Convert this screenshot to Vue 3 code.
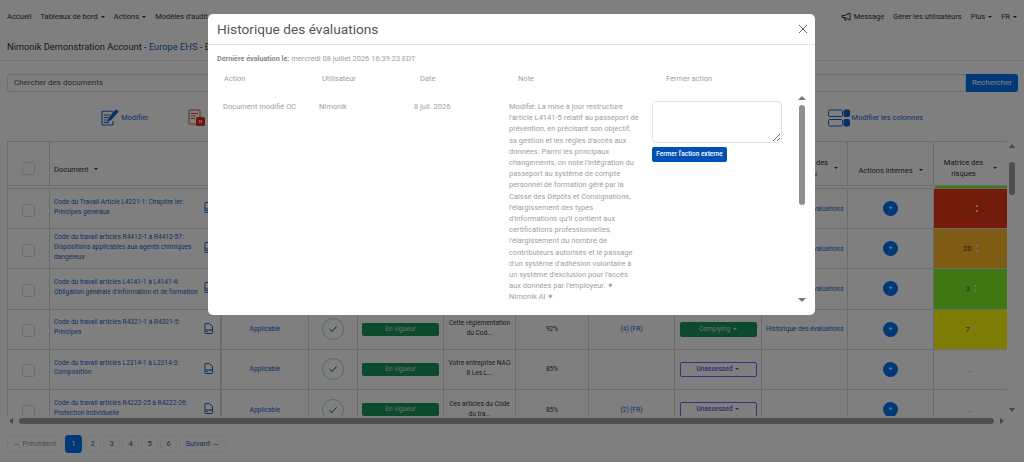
<template>
  <div class="page">
    <nav class="nav">
      <a>Accueil</a>
      <a class="caret">Tableaux de bord</a>
      <a class="caret">Actions</a>
      <a>Modèles d'audit</a>
      <div class="nav-right">
        <a class="msg">
          <svg width="11" height="9" viewBox="0 0 11 9" fill="none" stroke="#333" stroke-width="1">
            <path d="M1 3.5h2.5L9 1v7L3.5 5.5H1z" />
            <path d="M3 5.5L4 8.3h1.4" />
          </svg>
          Message
        </a>
        <a>Gérer les utilisateurs</a>
        <a class="caret">Plus</a>
        <a class="caret">FR</a>
      </div>
    </nav>

    <div class="title-bar">
      Nimonik Demonstration Account - <span class="blue">Europe EHS</span> - EHS
    </div>

    <div class="search">
      <div class="search-input">Chercher des documents</div>
      <div class="search-btn">Rechercher</div>
    </div>

    <div class="toolbar">
      <a class="tool">
        <svg width="18" height="18" viewBox="0 0 18 18" fill="none" stroke="#1763c4" stroke-width="1.1">
          <path d="M12 5V3.2a1 1 0 0 0-1-1H2a1 1 0 0 0-1 1V15a1 1 0 0 0 1 1h9a1 1 0 0 0 1-1v-3" />
          <path d="M3 6h6M3 8.5h4M3 11h3M3 13.5h5" />
          <path d="M7 12l1-3 7-8 2 1.6-7 8z" fill="#1763c4" />
        </svg>
        Modifier
      </a>
      <a class="tool tool-del">
        <svg width="18" height="18" viewBox="0 0 18 18" fill="none" stroke="#d9482b" stroke-width="1">
          <rect x="1" y="1" width="11" height="14" rx="1" />
          <path d="M3 4.5h7M3 7h5M3 9.5h4" />
          <rect x="8" y="8" width="9" height="9" rx="1.5" fill="#e02a10" stroke="none" />
          <path d="M11 11l3 3M14 11l-3 3" stroke="#fff" />
        </svg>
        Supprimer
      </a>
      <a class="tool tool-cols">
        <svg width="22" height="18" viewBox="0 0 22 18" fill="none" stroke="#1763c4" stroke-width="1">
          <rect x="0.5" y="1" width="14" height="6.5" rx="1.2" />
          <rect x="0.5" y="10.5" width="14" height="6.5" rx="1.2" />
          <rect x="16" y="1" width="5.5" height="6.5" rx="1" fill="#0b5fd0" />
          <rect x="16" y="10.5" width="5.5" height="6.5" rx="1" fill="#0b5fd0" />
        </svg>
        Modifier les colonnes
      </a>
    </div>

    <div class="table-area">
      <div class="table">
        <div class="row head">
          <div class="cell"><span class="box"></span></div>
          <div class="cell doc-cell head-doc"><span class="head-sort one">Document</span></div>
          <div class="cell"></div>
          <div class="cell"></div>
          <div class="cell"></div>
          <div class="cell"></div>
          <div class="cell"></div>
          <div class="cell"></div>
          <div class="cell"></div>
          <div class="cell head-hist"><span class="head-sort">Historique des<br /><span class="blue">Tableau</span></span></div>
          <div class="cell"><span class="head-sort one">Actions internes</span></div>
          <div class="cell last"><span class="head-sort wide">Matrice des<br />risques</span></div>
        </div>
        <div class="gap-row"><div class="gap-green"></div></div>

        <div v-for="row in rows" :key="row.doc" class="row">
          <div class="cell"><span class="box"></span></div>
          <div class="cell doc-cell">
            <a class="doc-link">{{ row.doc }}</a>
            <svg class="doc-icon" width="9" height="11" viewBox="0 0 9 11" fill="none" stroke="#1763c4" stroke-width="1">
              <path d="M1 1.5a1 1 0 0 1 1-1h3.4L8.5 3.4V9.5a1 1 0 0 1-1 1H2a1 1 0 0 1-1-1z" />
              <path d="M1 7h7.5" />
              <path d="M2.5 8.7h1.5" />
            </svg>
          </div>
          <div class="cell"><a v-if="row.pct" class="blue small">Applicable</a></div>
          <div class="cell">
            <span v-if="row.pct" class="check">
              <svg width="10" height="8" viewBox="0 0 10 8" fill="none" stroke="#14532f" stroke-width="1">
                <path d="M1.5 4.2l2.4 2.3 4.6-5" />
              </svg>
            </span>
          </div>
          <div class="cell"><span v-if="row.pct" class="status green-btn">En vigueur</span></div>
          <div class="cell small summary">{{ row.summary }}</div>
          <div class="cell small">{{ row.pct }}</div>
          <div class="cell"><a class="blue small">{{ row.refs }}</a></div>
          <div class="cell">
            <span v-if="row.state === 'Complying'" class="status big green-btn caret">Complying</span>
            <span v-else-if="row.state" class="status big outline caret">{{ row.state }}</span>
          </div>
          <div class="cell hist"><a class="blue small">{{ row.hist }}</a></div>
          <div class="cell"><span class="plus">+</span></div>
          <div class="cell last risk" :class="row.risk">
            <span class="score">{{ row.score }}</span>
            <span v-if="row.risk" class="kebab"></span>
          </div>
        </div>
      </div>

      <div class="vbar">
        <span class="arrow up"></span>
        <span class="vthumb"></span>
        <span class="arrow down"></span>
      </div>
    </div>

    <div class="hbar">
      <span class="arrow left"></span>
      <span class="hthumb"></span>
      <span class="arrow right"></span>
    </div>

    <div class="pager">
      <span class="pg prev">← Précédent</span>
      <span v-for="n in 6" :key="n" class="pg num" :class="{ active: n === 1 }">{{ n }}</span>
      <span class="pg next">Suivant →</span>
    </div>

    <div class="overlay">
      <div class="modal">
        <div class="modal-head">
          <span>Historique des évaluations</span>
          <svg width="10" height="10" viewBox="0 0 10 10" stroke="#666" stroke-width="1">
            <path d="M1 1l8 8M9 1l-8 8" />
          </svg>
        </div>
        <div class="last-eval">
          <b>Dernière évaluation le:</b> mercredi 08 juillet 2026 16:39:23 EDT
        </div>
        <div class="eval-head">
          <span>Action</span>
          <span>Utilisateur</span>
          <span>Date</span>
          <span>Note</span>
          <span>Fermer action</span>
        </div>
        <div class="eval-scroll">
          <div class="eval-row">
            <span>Document modifié OC</span>
            <span>Nimonik</span>
            <span>8 juil. 2026</span>
            <p class="note">{{ note }}</p>
            <div class="close-col">
              <textarea class="close-text"></textarea>
              <span class="close-btn">Fermer l'action externe</span>
            </div>
          </div>
          <div class="modal-bar">
            <span class="arrow up"></span>
            <span class="modal-thumb"></span>
            <span class="arrow down"></span>
          </div>
        </div>
      </div>
    </div>
  </div>
</template>

<script setup>
const note = "Modifié: La mise à jour restructure l'article L4141-5 relatif au passeport de prévention, en précisant son objectif, sa gestion et les règles d'accès aux données. Parmi les principaux changements, on note l'intégration du passeport au système de compte personnel de formation géré par la Caisse des Dépôts et Consignations, l'élargissement des types d'informations qu'il contient aux certifications professionnelles, l'élargissement du nombre de contributeurs autorisés et le passage d'un système d'adhésion volontaire à un système d'exclusion pour l'accès aux données par l'employeur. ✦ Nimonik AI ✦"

const rows = [
  { doc: 'Code du Travail Article L4221-1: Chapitre Ier: Principes généraux', hist: 'Historique des évaluations', score: '21', risk: 'red' },
  { doc: 'Code du travail articles R4412-1 à R4412-57: Dispositions applicables aux agents chimiques dangereux', hist: 'Historique des évaluations', score: '20', risk: 'orange' },
  { doc: "Code du travail articles L4141-1 à L4141-4: Obligation générale d'information et de formation", hist: 'Historique des évaluations', score: '3', risk: 'lime' },
  { doc: 'Code du travail articles R4321-1 à R4321-5: Principes', pct: '92%', summary: 'Cette réglementation du Cod...', refs: '(4) (FR)', state: 'Complying', hist: 'Historique des évaluations', score: '7', risk: 'yellow' },
  { doc: 'Code du travail articles L2314-1 à L2314-3: Composition', pct: '85%', summary: 'Votre entreprise NAO 8 Les L...', refs: '', state: 'Unassessed', hist: '', score: '...', risk: '' },
  { doc: 'Code du travail articles R4222-25 à R4222-26: Protection individuelle', pct: '85%', summary: 'Ces articles du Code du tra...', refs: '(2) (FR)', state: 'Unassessed', hist: '', score: '...', risk: '' },
]
</script>

<style>
html,
body {
  margin: 0;
  overflow: hidden;
}
</style>

<style scoped>
.page {
  position: relative;
  width: 1024px;
  height: 462px;
  overflow: hidden;
  background: #fff;
  color: #333;
  font-family: Roboto, "Liberation Sans", sans-serif;
  font-size: 7.5px;
  display: flex;
  flex-direction: column;
}

.nav {
  height: 33px;
  display: flex;
  align-items: center;
  gap: 9px;
  padding: 0 7px;
  font-size: 7.5px;
  flex: none;
  box-sizing: border-box;
}

.nav-right {
  margin-left: auto;
  display: flex;
  gap: 9px;
  align-items: center;
}

.msg {
  display: flex;
  align-items: center;
  gap: 2px;
}

.caret::after {
  content: "";
  display: inline-block;
  margin-left: 3px;
  vertical-align: 1px;
  border: 2px solid transparent;
  border-top-color: currentColor;
  border-bottom: 0;
}

.title-bar {
  flex: none;
  height: 28px;
  box-sizing: border-box;
  padding: 8px 7px 0;
  font-size: 9.3px;
  border-bottom: 1px solid #e4e4e4;
}

.blue {
  color: #1763c4;
}

.search {
  flex: none;
  display: flex;
  height: 18px;
  margin: 13px 6px 0 7px;
}

.search-input {
  flex: 1;
  border: 1px solid #dcdcdc;
  border-radius: 3px 0 0 3px;
  padding-left: 6px;
  line-height: 16px;
  font-size: 8px;
  color: #555;
}

.search-btn {
  width: 52px;
  background: #0070f0;
  color: #fff;
  text-align: center;
  line-height: 18px;
  font-size: 8px;
  border-radius: 0 3px 3px 0;
}

.toolbar {
  flex: none;
  height: 49px;
  display: flex;
  align-items: center;
  padding: 2px 101px 0 101px;
  box-sizing: border-box;
  color: #1763c4;
  font-size: 7.5px;
}

.tool {
  display: flex;
  align-items: center;
  gap: 2px;
}

.tool-del {
  margin-left: 39px;
  color: #1763c4;
}

.tool-cols {
  margin-left: auto;
}

.table-area {
  flex: none;
  height: 275px;
  display: flex;
  padding-left: 7px;
  overflow: hidden;
}

.table {
  width: 1000px;
  flex: none;
  border-top: 1px solid #d8d8d8;
  border-left: 1px solid #d8d8d8;
  box-sizing: border-box;
}

.row {
  display: grid;
  grid-template-columns: 42px 172px 87px 49px 86px 72px 73px 86px 87px 86px 86px 73px;
  height: 40.2px;
  box-sizing: border-box;
  border-bottom: 1px solid #d8d8d8;
}

.head {
  height: 44px;
  font-size: 7.5px;
}

.head .cell {
  padding-top: 9px;
}

.gap-row {
  height: 3px;
  display: flex;
  justify-content: flex-end;
  width: 999px;
  border-bottom: 1px solid #d8d8d8;
  box-sizing: border-box;
}

.gap-green {
  width: 72px;
  background: #7ef024;
}

.cell {
  display: flex;
  align-items: center;
  justify-content: center;
  text-align: center;
  border-right: 1px solid #d8d8d8;
  min-width: 0;
  box-sizing: border-box;
}

.cell.last {
  border-right: 0;
}

.head-doc {
  justify-content: flex-start;
  padding-left: 5px;
}

.head-sort {
  position: relative;
  padding-right: 10px;
  line-height: 11px;
  display: inline-block;
}

.head-sort.one {
  margin-top: 4px;
}

.head-sort.wide {
  padding-right: 14px;
}

.head-sort::after {
  content: "";
  position: absolute;
  right: 0;
  top: 50%;
  margin-top: -1px;
  border: 2.5px solid transparent;
  border-top-color: #333;
  border-bottom: 0;
}

.head-hist {
  justify-content: flex-end;
  padding-right: 9px;
}

.box {
  width: 11px;
  height: 11px;
  margin-top: 3px;
  border: 1px solid #dcdcdc;
  border-radius: 2px;
  background: #fff;
}

.head .box {
  margin-top: 0;
}

.doc-cell {
  justify-content: space-between;
  text-align: left;
  padding: 0 7px 2px 4px;
  gap: 6px;
  border-right-width: 2px;
}

.doc-link {
  color: #1763c4;
  font-size: 6.6px;
  line-height: 9.8px;
}

.doc-icon {
  flex: none;
}

.small {
  font-size: 6.6px;
}

.summary {
  line-height: 10px;
  padding: 0 3px 2px;
}

.check {
  width: 20px;
  height: 20px;
  border: 1px solid #9fe0bc;
  border-radius: 50%;
  display: flex;
  align-items: center;
  justify-content: center;
}

.status {
  width: 77px;
  height: 13px;
  border-radius: 2px;
  font-size: 6.6px;
  line-height: 13px;
  text-align: center;
  box-sizing: border-box;
}

.status.big {
  height: 15px;
  line-height: 15px;
}

.green-btn {
  background: #189458;
  color: #ddd;
}

.outline {
  border: 1px solid #6f63f0;
  line-height: 13px !important;
  color: #6258e0;
  font-weight: 500;
  background: #fff;
}

.hist {
  justify-content: flex-start;
  padding-left: 4px;
  white-space: nowrap;
}

.plus {
  width: 15px;
  height: 15px;
  border-radius: 50%;
  background: #0070f0;
  color: #fff;
  font-size: 8px;
  line-height: 14px;
  text-align: center;
}

.risk {
  gap: 4px;
  font-size: 7.5px;
  color: #aaa;
}

.red {
  background: #e83818;
  color: #6a5a00;
}

.orange {
  background: #feb828;
  color: #5a2a00;
}

.lime {
  background: #7ef024;
  color: #0c6070;
}

.yellow {
  background: #fff80c;
  color: #b01010;
}

.kebab {
  height: 7px;
  border-left: 2px dotted #ddd;
}

.vbar {
  width: 10px;
  flex: none;
  display: flex;
  flex-direction: column;
  align-items: center;
  padding-top: 3px;
  box-sizing: border-box;
}

.vthumb {
  width: 6px;
  height: 33px;
  margin-top: 14px;
  border-radius: 3px;
  background: #9c9c9c;
  flex: none;
}

.vbar .down {
  margin-top: auto;
  margin-bottom: 4px;
}

.arrow {
  width: 0;
  height: 0;
  border: 3.5px solid transparent;
  flex: none;
}

.arrow.up {
  border-bottom: 4px solid #8c8c8c;
  border-top: 0;
}

.arrow.down {
  border-top: 4px solid #8c8c8c;
  border-bottom: 0;
}

.arrow.left {
  border-right: 4px solid #8c8c8c;
  border-left: 0;
}

.arrow.right {
  border-left: 4px solid #8c8c8c;
  border-right: 0;
}

.hbar {
  flex: none;
  height: 10px;
  display: flex;
  align-items: center;
  padding: 0 20px 0 9px;
  gap: 6px;
}

.hthumb {
  flex: 1;
  height: 6px;
  border-radius: 3px;
  background: #9c9c9c;
}

.pager {
  flex: none;
  display: flex;
  gap: 2px;
  padding: 9px 0 0 7px;
}

.pg {
  height: 18px;
  box-sizing: border-box;
  border: 1px solid #f0f0f0;
  border-radius: 3px;
  line-height: 16px;
  font-size: 7.5px;
  text-align: center;
  color: #1763c4;
}

.prev {
  width: 55px;
  color: #999;
  margin-right: 1px;
}

.num {
  width: 17px;
}

.active {
  background: #0070f0;
  border-color: #0070f0;
  color: #fff;
}

.next {
  width: 47px;
}

.overlay {
  position: absolute;
  inset: 0;
  background: rgba(0, 0, 0, 0.5);
  display: flex;
  justify-content: center;
  align-items: flex-start;
  padding: 14px 1px 0 0;
}

.modal {
  width: 607px;
  height: 301px;
  background: #fff;
  border-radius: 5px;
  display: flex;
  flex-direction: column;
  overflow: hidden;
  color: #a0a0a0;
}

.modal-head {
  height: 31px;
  flex: none;
  box-sizing: border-box;
  border-bottom: 1px solid #e3e6e8;
  padding: 0 7px 0 9px;
  display: flex;
  align-items: center;
  justify-content: space-between;
  font-size: 13.7px;
  color: #555;
}

.last-eval {
  padding: 9px 9px 0;
  font-size: 7.5px;
  line-height: 9px;
  flex: none;
}

.last-eval b {
  color: #888;
  font-size: 7.2px;
}

.eval-head {
  flex: none;
  display: grid;
  grid-template-columns: 98px 98px 98px 148px 1fr;
  padding: 11px 0 0 16px;
  font-size: 7.5px;
  line-height: 9px;
  height: 25px;
  box-sizing: border-box;
}

.eval-scroll {
  flex: 1;
  min-height: 0;
  display: flex;
  padding-left: 15px;
  overflow: hidden;
  position: relative;
}

.eval-row {
  display: grid;
  grid-template-columns: 96px 95px 95px 143px 130px;
  align-items: start;
  font-size: 7.5px;
  line-height: 11.2px;
  padding-top: 13px;
  height: max-content;
}

.note {
  margin: 0;
  width: 130.5px;
}

.close-col {
  display: flex;
  flex-direction: column;
  align-items: flex-start;
  gap: 4px;
}

.close-text {
  width: 130px;
  height: 42px;
  box-sizing: border-box;
  border: 1px solid #e3e3e3;
  border-radius: 4px;
  display: block;
  margin: 0;
}

.close-btn {
  height: 15px;
  width: 75px;
  background: #0050b5;
  color: #fff;
  border-radius: 2px;
  font-size: 6.5px;
  font-weight: 500;
  line-height: 15px;
  text-align: center;
}

.modal-bar {
  position: absolute;
  right: 8px;
  top: 8px;
  bottom: 13px;
  width: 10px;
  display: flex;
  flex-direction: column;
  align-items: center;
}

.modal-bar .arrow {
  border-width: 4px;
}

.modal-bar .arrow.up {
  border-top: 0;
  border-bottom-color: #777;
}

.modal-bar .arrow.down {
  border-bottom: 0;
  border-top-color: #777;
}

.modal-thumb {
  width: 5.5px;
  height: 100px;
  margin-top: 5px;
  border-radius: 3px;
  background: #8f8f8f;
  flex: none;
}

.modal-bar .down {
  margin-top: auto;
}
</style>
